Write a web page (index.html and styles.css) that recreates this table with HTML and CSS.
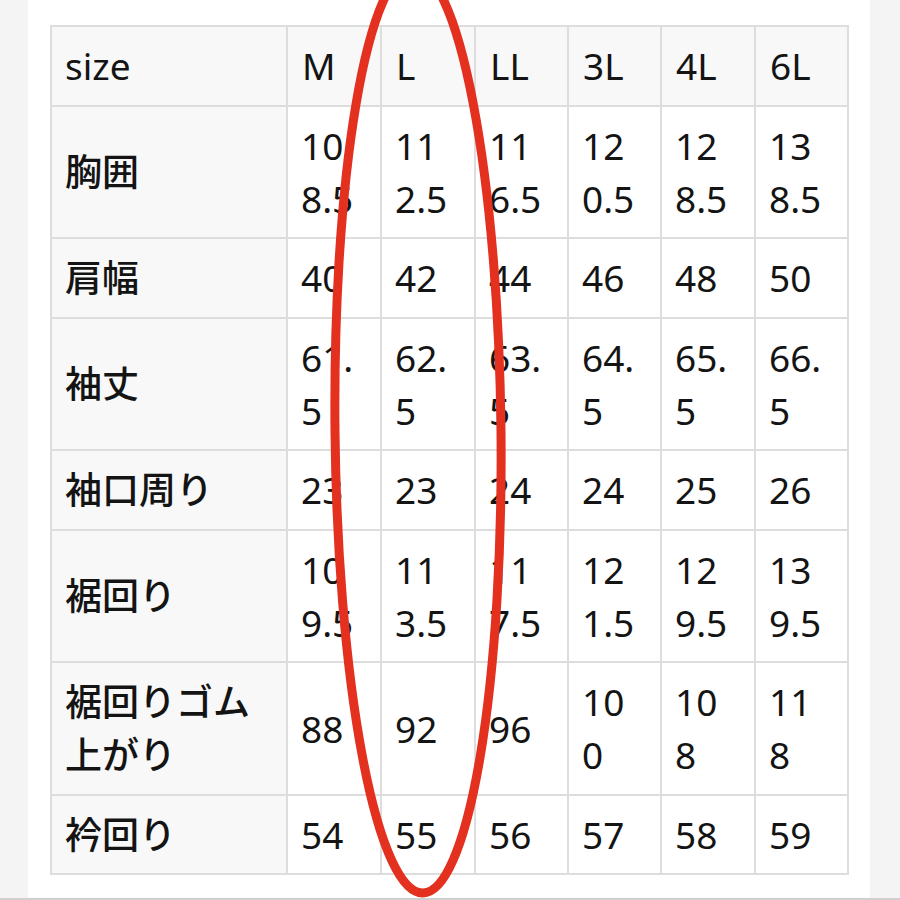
FILE: index.html
```html
<!DOCTYPE html>
<html lang="ja">
<head>
<meta charset="utf-8">
<link rel="stylesheet" href="styles.css">
</head>
<body>
<div class="page">
  <div class="panel">
    <table class="sizes">
      <colgroup>
        <col class="c-label"><col class="c-m"><col class="c-l"><col class="c-ll"><col class="c-3l"><col class="c-4l"><col class="c-6l">
      </colgroup>
      <tr class="head"><th>size</th><th>M</th><th>L</th><th>LL</th><th>3L</th><th>4L</th><th>6L</th></tr>
      <tr><th class="label">胸囲</th><td>108.5</td><td>112.5</td><td>116.5</td><td>120.5</td><td>128.5</td><td>138.5</td></tr>
      <tr><th class="label">肩幅</th><td>40</td><td>42</td><td>44</td><td>46</td><td>48</td><td>50</td></tr>
      <tr><th class="label">袖丈</th><td>61.5</td><td>62.5</td><td>63.5</td><td>64.5</td><td>65.5</td><td>66.5</td></tr>
      <tr><th class="label">袖口周り</th><td>23</td><td>23</td><td>24</td><td>24</td><td>25</td><td>26</td></tr>
      <tr><th class="label">裾回り</th><td>109.5</td><td>113.5</td><td>117.5</td><td>121.5</td><td>129.5</td><td>139.5</td></tr>
      <tr><th class="label">裾回りゴム上がり</th><td>88</td><td>92</td><td>96</td><td>100</td><td>108</td><td>118</td></tr>
      <tr><th class="label">衿回り</th><td>54</td><td>55</td><td>56</td><td>57</td><td>58</td><td>59</td></tr>
    </table>
  </div>
  <svg class="mark" width="900" height="900" viewBox="0 0 900 900">
    <ellipse cx="418" cy="431" rx="83" ry="462" fill="none" stroke="#e3301f" stroke-width="9" transform="rotate(-0.6 418 431)"/>
  </svg>
</div>
</body>
</html>
```
FILE: styles.css
```css
html, body {
  margin: 0;
  padding: 0;
  background: #f4f4f4;
}
.page {
  position: relative;
  width: 900px;
  height: 900px;
  overflow: hidden;
  border-bottom: 2px solid #d0d0d0;
  box-sizing: border-box;
}
.panel {
  margin-left: 28px;
  width: 842px;
  height: 898px;
  background: #ffffff;
  padding-top: 25px;
  padding-left: 22px;
  box-sizing: border-box;
}
.sizes {
  border-collapse: collapse;
  table-layout: fixed;
  width: 797px;
  font-family: "Noto Sans", "Noto Sans CJK JP", sans-serif;
  font-size: 37px;
  line-height: 53px;
  color: #141414;
}
.c-label { width: 236px; }
.c-m, .c-l, .c-4l { width: 94px; }
.c-ll, .c-3l, .c-6l { width: 93px; }
.sizes th, .sizes td {
  border: 2px solid #dddddd;
  padding: 12px 18px 12.5px 13px;
  text-align: left;
  vertical-align: middle;
  font-weight: normal;
  word-break: break-all;
}
.sizes td {
  background: #ffffff;
}
.sizes th {
  background: #f8f8f8;
}
.sizes th.label {
  font-weight: 500;
}
.sizes .head th + th {
  padding-left: 14px;
}
.mark {
  position: absolute;
  left: 0;
  top: 0;
  pointer-events: none;
}
```
